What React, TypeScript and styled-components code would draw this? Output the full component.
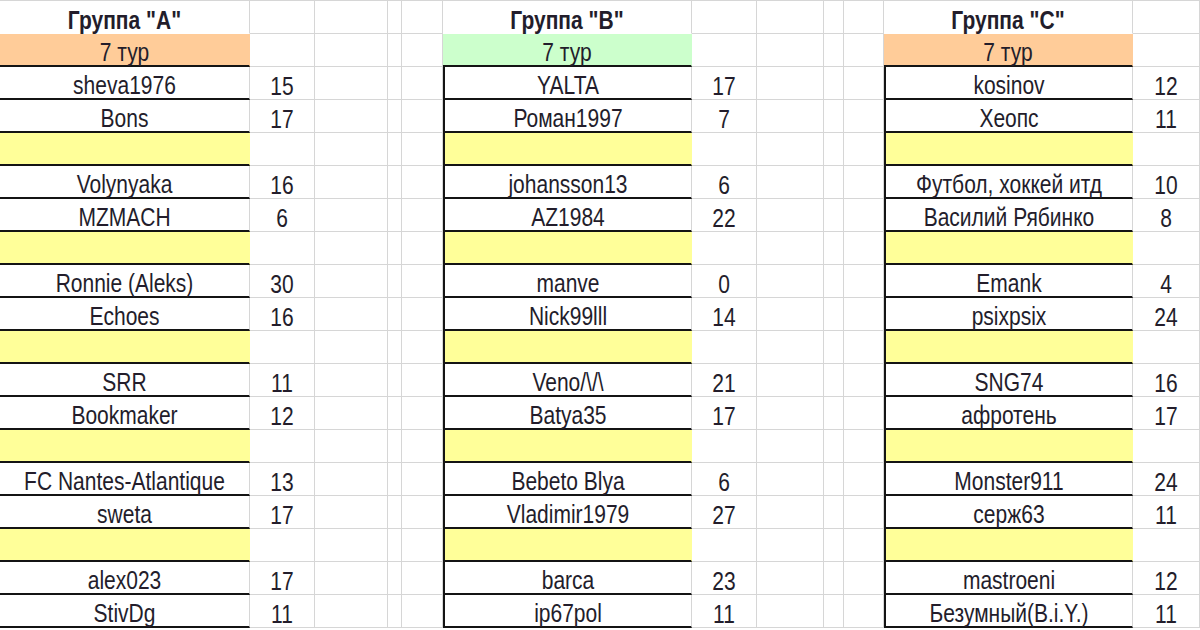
import React from "react";
import styled, { createGlobalStyle } from "styled-components";

const GRID = "#d6d6d6";
const ORANGE = "#ffcc99";
const GREEN = "#ccffcc";
const YELLOW = "#ffff99";

type Entry = [string, number] | null;

interface Group {
  title: string;
  tourFill: string;
  boxed: boolean;
  entries: Entry[];
}

const groups: Group[] = [
  {
    title: 'Группа "A"',
    tourFill: ORANGE,
    boxed: false,
    entries: [
      ["sheva1976", 15],
      ["Bons", 17],
      null,
      ["Volynyaka", 16],
      ["MZMACH", 6],
      null,
      ["Ronnie (Aleks)", 30],
      ["Echoes", 16],
      null,
      ["SRR", 11],
      ["Bookmaker", 12],
      null,
      ["FC Nantes-Atlantique", 13],
      ["sweta", 17],
      null,
      ["alex023", 17],
      ["StivDg", 11],
    ],
  },
  {
    title: 'Группа "B"',
    tourFill: GREEN,
    boxed: true,
    entries: [
      ["YALTA", 17],
      ["Роман1997", 7],
      null,
      ["johansson13", 6],
      ["AZ1984", 22],
      null,
      ["manve", 0],
      ["Nick99lll", 14],
      null,
      ["Veno/\\/\\", 21],
      ["Batya35", 17],
      null,
      ["Bebeto Blya", 6],
      ["Vladimir1979", 27],
      null,
      ["barca", 23],
      ["ip67pol", 11],
    ],
  },
  {
    title: 'Группа "C"',
    tourFill: ORANGE,
    boxed: true,
    entries: [
      ["kosinov", 12],
      ["Хеопс", 11],
      null,
      ["Футбол, хоккей итд", 10],
      ["Василий Рябинко", 8],
      null,
      ["Emank", 4],
      ["psixpsix", 24],
      null,
      ["SNG74", 16],
      ["афротень", 17],
      null,
      ["Monster911", 24],
      ["серж63", 11],
      null,
      ["mastroeni", 12],
      ["Безумный(B.i.Y.)", 11],
    ],
  },
];

const ROWS = 19;

const GlobalStyle = createGlobalStyle`
  html, body {
    margin: 0;
    padding: 0;
    background: #fff;
  }
  body {
    width: 1200px;
    height: 630px;
    overflow: hidden;
    font-family: "Liberation Sans", Arial, sans-serif;
  }
`;

const Sheet = styled.div`
  display: grid;
  grid-template-columns: 250px 65px 73px 14px 41px 249px 65px 67px 20px 40px 249px 67px;
  grid-auto-rows: 33px;
  width: 1200px;
  border-top: 1px solid ${GRID};
`;

const Cell = styled.div<{ $fill?: string; $boxed?: boolean; $ruled?: boolean; $open?: boolean }>`
  box-sizing: border-box;
  display: flex;
  align-items: center;
  justify-content: center;
  min-width: 0;
  background: ${(p) => p.$fill ?? "#fff"};
  border-right: 1px solid ${(p) => (p.$fill ? "transparent" : GRID)};
  border-bottom: ${(p) =>
    p.$ruled ? "2px solid #141414" : `1px solid ${p.$open ? "transparent" : GRID}`};
  border-left: ${(p) => (p.$boxed ? "2px solid #141414" : "none")};
`;

const Label = styled.span<{ $bold?: boolean }>`
  display: block;
  font-size: 21px;
  line-height: 1;
  font-weight: ${(p) => (p.$bold ? 700 : 400)};
  color: #231d2b;
  white-space: nowrap;
  transform: translateY(2px) scaleY(1.25);
`;

const GroupCells = ({ group, row }: { group: Group; row: number }) => {
  if (row === 0) {
    return (
      <>
        <Cell $open>
          <Label $bold>{group.title}</Label>
        </Cell>
        <Cell />
      </>
    );
  }
  if (row === 1) {
    return (
      <>
        <Cell $fill={group.tourFill} $ruled>
          <Label>7 тур</Label>
        </Cell>
        <Cell />
      </>
    );
  }
  const entry = group.entries[row - 2];
  return (
    <>
      <Cell $boxed={group.boxed} $ruled $fill={entry ? undefined : YELLOW}>
        {entry && <Label>{entry[0]}</Label>}
      </Cell>
      <Cell>{entry && <Label>{entry[1]}</Label>}</Cell>
    </>
  );
};

const Gap = () => (
  <>
    <Cell />
    <Cell />
    <Cell />
  </>
);

export default function App() {
  return (
    <>
      <GlobalStyle />
      <Sheet>
        {Array.from({ length: ROWS }, (_, row) => (
          <React.Fragment key={row}>
            {groups.map((group, i) => (
              <React.Fragment key={group.title}>
                <GroupCells group={group} row={row} />
                {i < groups.length - 1 && <Gap />}
              </React.Fragment>
            ))}
          </React.Fragment>
        ))}
      </Sheet>
    </>
  );
}
